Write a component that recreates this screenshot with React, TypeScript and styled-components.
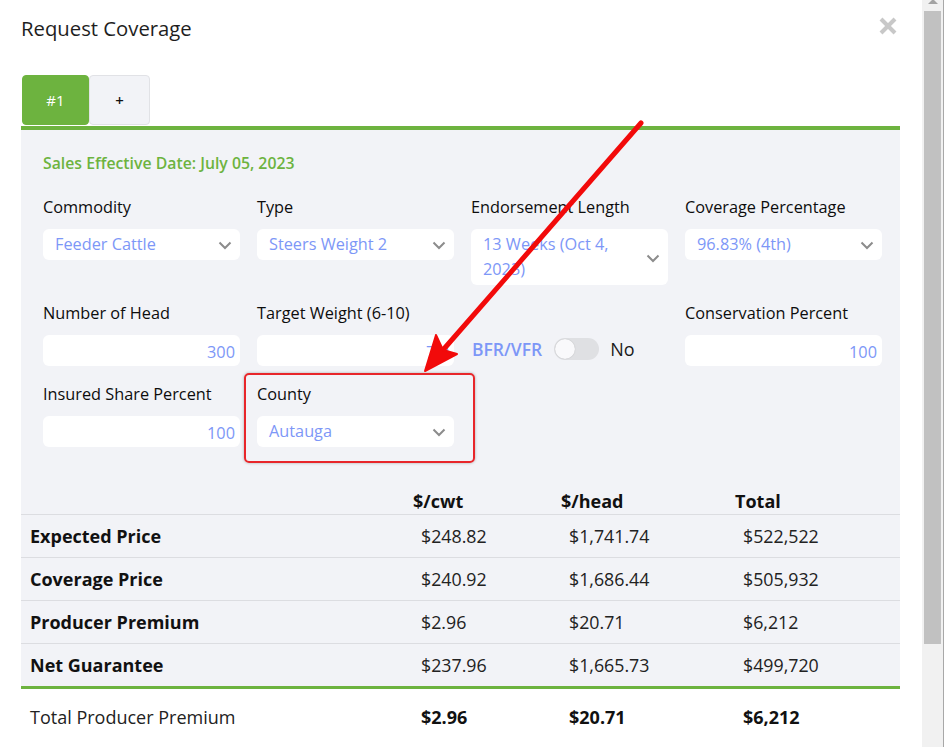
import styled, { createGlobalStyle } from "styled-components";

const GlobalStyle = createGlobalStyle`
  html, body {
    margin: 0;
    padding: 0;
    background: #ffffff;
  }
  body {
    font-family: "Open Sans", "Noto Sans", Arial, sans-serif;
    color: #1a1a1a;
    overflow: hidden;
  }
`;

const GREEN = "#6db33f";
const BLUE = "#7d97f7";

const fieldsRow1 = [
  { label: "Commodity", value: "Feeder Cattle" },
  { label: "Type", value: "Steers Weight 2" },
  { label: "Endorsement Length", value: "13 Weeks (Oct 4, 2023)" },
  { label: "Coverage Percentage", value: "96.83% (4th)" },
];

const rows = [
  { name: "Expected Price", cwt: "$248.82", head: "$1,741.74", total: "$522,522" },
  { name: "Coverage Price", cwt: "$240.92", head: "$1,686.44", total: "$505,932" },
  { name: "Producer Premium", cwt: "$2.96", head: "$20.71", total: "$6,212" },
  { name: "Net Guarantee", cwt: "$237.96", head: "$1,665.73", total: "$499,720" },
];

const Chevron = () => (
  <svg width="14" height="9" viewBox="0 0 14 9">
    <polyline points="1.5,1.5 7,7 12.5,1.5" fill="none" stroke="#8c8c8c" strokeWidth="2" />
  </svg>
);

const CloseIcon = () => (
  <svg width="18" height="18" viewBox="0 0 18 18">
    <line x1="2" y1="2" x2="16" y2="16" stroke="#c8c8c8" strokeWidth="4" />
    <line x1="16" y1="2" x2="2" y2="16" stroke="#c8c8c8" strokeWidth="4" />
  </svg>
);

const Select = ({ value }: { value: string }) => (
  <SelectBox>
    <span>{value}</span>
    <Chevron />
  </SelectBox>
);

const App = () => {
  return (
    <Page>
      <GlobalStyle />
      <Main>
        <Header>
          <Title>Request Coverage</Title>
          <CloseButton>
            <CloseIcon />
          </CloseButton>
        </Header>

        <Tabs>
          <Tab $active>#1</Tab>
          <Tab>+</Tab>
        </Tabs>

        <Panel>
          <SalesDate>Sales Effective Date: July 05, 2023</SalesDate>

          <FormGrid>
            {fieldsRow1.map((f) => (
              <Field key={f.label}>
                <Label>{f.label}</Label>
                <Select value={f.value} />
              </Field>
            ))}

            <Field>
              <Label>Number of Head</Label>
              <Input>300</Input>
            </Field>
            <Field>
              <Label>Target Weight (6-10)</Label>
              <Input>7.0</Input>
            </Field>
            <ToggleField>
              <ToggleLabel>BFR/VFR</ToggleLabel>
              <Switch>
                <Knob />
              </Switch>
              <ToggleText>No</ToggleText>
            </ToggleField>
            <Field>
              <Label>Conservation Percent</Label>
              <Input>100</Input>
            </Field>

            <Field>
              <Label>Insured Share Percent</Label>
              <Input>100</Input>
            </Field>
            <Field>
              <Label>County</Label>
              <Select value="Autauga" />
            </Field>
          </FormGrid>

          <Table>
            <HeadRow>
              <HeadCell />
              <HeadCell>$/cwt</HeadCell>
              <HeadCell>$/head</HeadCell>
              <HeadCell>Total</HeadCell>
            </HeadRow>
            {rows.map((r, i) => (
              <BodyRow key={r.name} $last={i === rows.length - 1}>
                <NameCell>{r.name}</NameCell>
                <ValueCell>{r.cwt}</ValueCell>
                <ValueCell>{r.head}</ValueCell>
                <ValueCell>{r.total}</ValueCell>
              </BodyRow>
            ))}
          </Table>
        </Panel>

        <TotalRow>
          <TotalName>Total Producer Premium</TotalName>
          <TotalValue>$2.96</TotalValue>
          <TotalValue>$20.71</TotalValue>
          <TotalValue>$6,212</TotalValue>
        </TotalRow>
      </Main>

      <Scrollbar>
        <ScrollArrow>
          <svg width="10" height="6" viewBox="0 0 10 6">
            <polygon points="0,5 5,0 10,5" fill="#a3a3a3" />
          </svg>
        </ScrollArrow>
        <Thumb />
      </Scrollbar>

      <Annotation>
        <HighlightBox />
        <ArrowSvg width="944" height="747" viewBox="0 0 944 747">
          <line x1="641" y1="123" x2="443" y2="350" stroke="#f20a0a" strokeWidth="5" strokeLinecap="round" />
          <polygon points="425,371 457,354 443,350 436,335" fill="#f20a0a" stroke="#f20a0a" strokeWidth="2" strokeLinejoin="round" />
        </ArrowSvg>
      </Annotation>
    </Page>
  );
};

export default App;

const Page = styled.div`
  position: relative;
  display: flex;
  width: 944px;
  height: 747px;
  overflow: hidden;
`;

const Main = styled.div`
  flex: 1;
  padding: 0 22px 0 21px;
`;

const Header = styled.div`
  display: flex;
  justify-content: space-between;
  align-items: center;
  padding-top: 16px;
  height: 24px;
`;

const Title = styled.h1`
  margin: 0;
  font-size: 20.3px;
  font-weight: 400;
  line-height: 24px;
  color: #1e1e1e;
`;

const CloseButton = styled.div`
  display: flex;
  margin-right: 3px;
  margin-top: -4px;
`;

const Tabs = styled.div`
  display: flex;
  margin-top: 35px;
  padding-left: 1px;
  margin-bottom: 1px;
`;

const Tab = styled.div<{ $active?: boolean }>`
  display: flex;
  align-items: center;
  justify-content: center;
  box-sizing: border-box;
  width: ${(p) => (p.$active ? "67px" : "61px")};
  height: 50px;
  border-radius: 4px;
  border: 1px solid ${(p) => (p.$active ? GREEN : "#e1e2e6")};
  background: ${(p) => (p.$active ? GREEN : "#f2f3f7")};
  color: ${(p) => (p.$active ? "#fff" : "#111")};
  font-size: 15px;
  font-weight: ${(p) => (p.$active ? 400 : 600)};
`;

const Panel = styled.div`
  background: #f2f3f7;
  border-top: 4px solid ${GREEN};
  padding-top: 23px;
`;

const SalesDate = styled.div`
  padding: 0 18px 0 22px;
  color: ${GREEN};
  font-size: 15.8px;
  font-weight: 600;
  line-height: 20px;
`;

const FormGrid = styled.div`
  display: grid;
  grid-template-columns: repeat(4, 197px);
  column-gap: 17px;
  row-gap: 17px;
  padding: 0 18px 0 22px;
  margin-top: 23px;
`;

const Field = styled.div`
  display: flex;
  flex-direction: column;
`;

const Label = styled.div`
  font-size: 16.3px;
  line-height: 22px;
  margin-bottom: 11px;
  color: #0d0d0d;
`;

const SelectBox = styled.div`
  display: flex;
  align-items: center;
  gap: 10px;
  box-sizing: border-box;
  min-height: 31px;
  padding: 3px 8px 3px 12px;
  background: #fff;
  border-radius: 6px;
  color: ${BLUE};
  font-size: 16.3px;
  line-height: 25px;

  span {
    flex: 1;
  }

  svg {
    flex-shrink: 0;
    margin-top: 2px;
  }
`;

const Input = styled.div`
  box-sizing: border-box;
  height: 31px;
  padding: 2px 5px 0 12px;
  background: #fff;
  border-radius: 6px;
  color: ${BLUE};
  font-size: 16.3px;
  line-height: 31px;
  text-align: right;
`;

const ToggleField = styled.div`
  align-self: end;
  display: flex;
  align-items: center;
  height: 31px;
  padding-left: 1px;
  margin-bottom: 2px;
`;

const ToggleLabel = styled.span`
  color: ${BLUE};
  font-size: 17.5px;
  font-weight: 600;
`;

const Switch = styled.div`
  display: flex;
  align-items: center;
  box-sizing: border-box;
  width: 45px;
  height: 22px;
  margin-left: 12px;
  padding: 0 1px;
  border-radius: 11px;
  background: #dfe0e3;
`;

const Knob = styled.div`
  width: 20px;
  height: 20px;
  border-radius: 50%;
  background: #f9f9fb;
  box-shadow: 0 0 1px rgba(0, 0, 0, 0.25);
`;

const ToggleText = styled.span`
  margin-left: 11px;
  font-size: 18px;
  color: #1a1a1a;
`;

const Table = styled.div`
  margin-top: 31px;
`;

const columns = "392px 148px 174px 1fr";

const HeadRow = styled.div`
  display: grid;
  grid-template-columns: ${columns};
  border-bottom: 1px solid #dcdde1;
`;

const HeadCell = styled.div`
  padding: 12px 0 2px;
  font-size: 18px;
  font-weight: 700;
  line-height: 22px;
  color: #111;
`;

const BodyRow = styled.div<{ $last?: boolean }>`
  display: grid;
  grid-template-columns: ${columns};
  align-items: center;
  height: 42px;
  border-bottom: ${(p) => (p.$last ? `3px solid ${GREEN}` : "1px solid #dcdde1")};
`;

const NameCell = styled.div`
  padding-left: 9px;
  font-size: 18px;
  font-weight: 700;
  color: #111;
`;

const ValueCell = styled.div`
  padding-left: 8px;
  font-size: 17.8px;
  color: #222;
`;

const TotalRow = styled.div`
  display: grid;
  grid-template-columns: ${columns};
  align-items: center;
  height: 56px;
`;

const TotalName = styled.div`
  padding-left: 9px;
  font-size: 18px;
  color: #222;
`;

const TotalValue = styled.div`
  padding-left: 8px;
  font-size: 18px;
  font-weight: 700;
  color: #111;
`;

const Scrollbar = styled.div`
  display: flex;
  flex-direction: column;
  align-items: center;
  box-sizing: border-box;
  width: 22px;
  background: #f1f1f1;
  border-right: 1px solid #a8a8a8;
`;

const ScrollArrow = styled.div`
  height: 12px;
  display: flex;
  justify-content: center;
  margin-top: -1px;
`;

const Thumb = styled.div`
  width: 17px;
  height: 633px;
  background: #c1c1c1;
`;

const Annotation = styled.div`
  position: absolute;
  inset: 0;
  pointer-events: none;
`;

const HighlightBox = styled.div`
  position: absolute;
  left: 244px;
  top: 373px;
  width: 231px;
  height: 90px;
  box-sizing: border-box;
  border: 2px solid #e8262a;
  border-radius: 5px;
  box-shadow: 0 0 3px rgba(0, 0, 0, 0.3);
`;

const ArrowSvg = styled.svg`
  position: absolute;
  left: 0;
  top: 0;
`;
